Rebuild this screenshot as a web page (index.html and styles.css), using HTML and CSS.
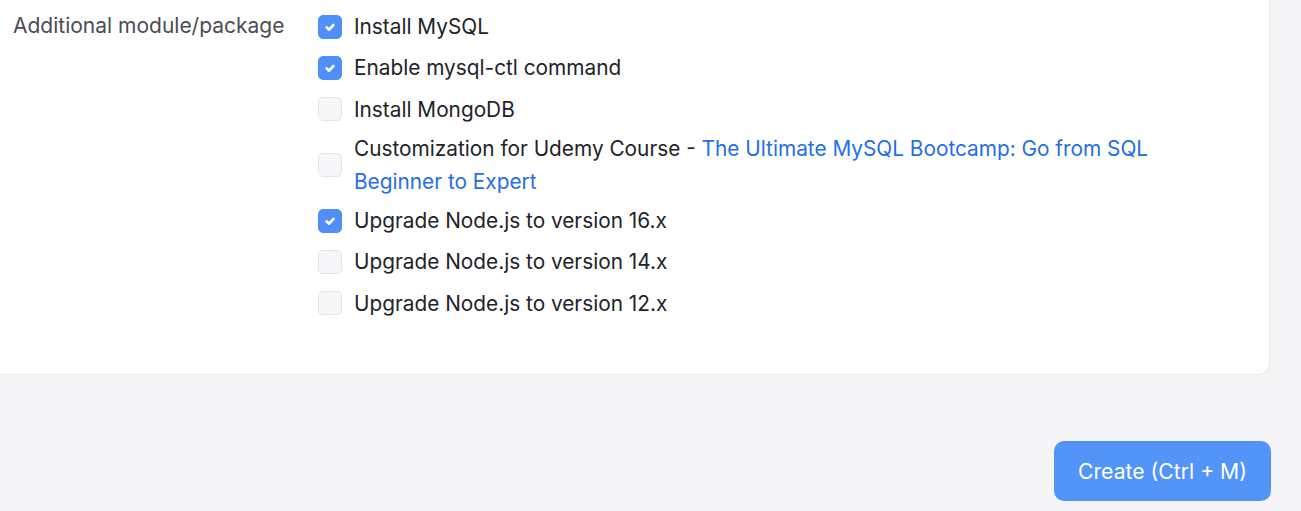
FILE: index.html
```html
<!DOCTYPE html>
<html>
<head>
<meta charset="utf-8">
<link rel="stylesheet" href="styles.css">
</head>
<body>
<div class="page">
  <div class="card">
    <div class="field">
      <div class="label">Additional module/package</div>
      <div class="options">
        <label class="opt"><span class="box checked"><svg viewBox="0 0 24 24"><path d="M8.4 12.4l2.6 2.5 4.6-5" /></svg></span><span class="txt">Install MySQL</span></label>
        <label class="opt"><span class="box checked"><svg viewBox="0 0 24 24"><path d="M8.4 12.4l2.6 2.5 4.6-5" /></svg></span><span class="txt">Enable mysql-ctl command</span></label>
        <label class="opt"><span class="box"></span><span class="txt">Install MongoDB</span></label>
        <label class="opt"><span class="box"></span><span class="txt">Customization for Udemy Course - <a class="link" href="#">The Ultimate MySQL Bootcamp: Go from SQL Beginner to Expert</a></span></label>
        <label class="opt"><span class="box checked"><svg viewBox="0 0 24 24"><path d="M8.4 12.4l2.6 2.5 4.6-5" /></svg></span><span class="txt">Upgrade Node.js to version 16.x</span></label>
        <label class="opt"><span class="box"></span><span class="txt">Upgrade Node.js to version 14.x</span></label>
        <label class="opt"><span class="box"></span><span class="txt">Upgrade Node.js to version 12.x</span></label>
      </div>
    </div>
  </div>
  <div class="actions">
    <button class="btn">Create (Ctrl + M)</button>
  </div>
</div>
</body>
</html>
```
FILE: styles.css
```css
html, body {
  margin: 0;
  padding: 0;
  background: #f5f5f8;
  font-family: Inter, "Noto Sans", sans-serif;
  color: #222328;
}
.page {
  width: 1301px;
  padding-top: 1px;
  margin-top: -1px;
}
.card {
  background: #ffffff;
  border: 1px solid #e8e9ee;
  border-top: none;
  border-left: none;
  border-radius: 0 0 12px 0;
  width: 1270px;
  margin-top: -20px;
  padding: 28px 0 52px 0;
  box-sizing: border-box;
}
.field {
  display: flex;
  align-items: flex-start;
}
.label {
  width: 318px;
  padding-left: 13px;
  box-sizing: border-box;
  font-size: 21px;
  line-height: 30px;
  color: #4b4c55;
  margin-top: 3px;
}
.options {
  display: flex;
  flex-direction: column;
  gap: 4.3px;
  width: 840px;
}
.opt {
  display: flex;
  align-items: center;
  gap: 12px;
  min-height: 37px;
  font-size: 20.8px;
  line-height: 33px;
  cursor: pointer;
}
.box {
  flex: 0 0 auto;
  width: 24px;
  height: 24px;
  border-radius: 5px;
  border: 1px solid #e3e4e8;
  background: #f7f7f9;
  box-sizing: border-box;
  display: flex;
  align-items: center;
  justify-content: center;
}
.box.checked {
  background: #4f8ff7;
  border-color: #4f8ff7;
}
.box svg {
  width: 24px;
  height: 24px;
  fill: none;
  stroke: #ffffff;
  stroke-width: 3;
  stroke-linecap: round;
  stroke-linejoin: round;
}
.txt {
  color: #222328;
}
.link {
  color: #1f6fe5;
  text-decoration: none;
}
.actions {
  display: flex;
  justify-content: flex-end;
  width: 1271px;
  padding-top: 66px;
}
.btn {
  width: 217px;
  height: 60px;
  border: none;
  border-radius: 10px;
  background: #5294f8;
  color: #ffffff;
  font-family: Inter, "Noto Sans", sans-serif;
  font-size: 21.2px;
  cursor: pointer;
}
```
